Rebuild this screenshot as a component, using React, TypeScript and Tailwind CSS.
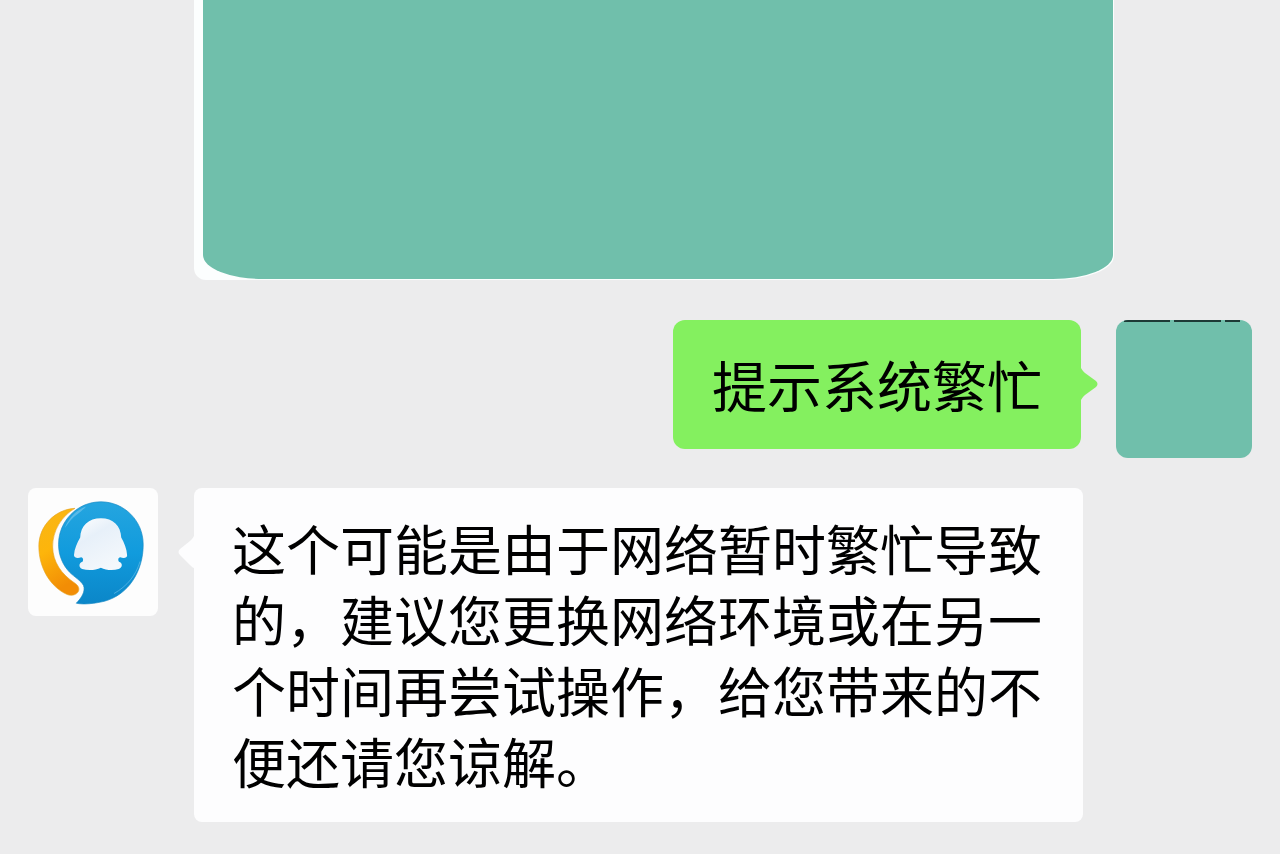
import { ReactNode } from 'react';

type Side = 'sent' | 'received';

interface BubbleProps {
  side: Side;
  children: ReactNode;
}

const bubbleMap: Record<Side, string> = {
  sent: 'bg-[#84f05f] rounded-xl text-[55px] px-[39px] pt-7 pb-[30px]',
  received: 'bg-[#fdfdfe] rounded-lg text-[54px] px-[38px] pt-6 pb-[26px]',
};

function Bubble({ side, children }: BubbleProps) {
  return (
    <div className={`relative leading-[71px] text-black ${bubbleMap[side]}`}>
      {side === 'sent' ? (
        <svg className="absolute left-full top-12 h-8 w-[17px]" viewBox="0 0 17 32" aria-hidden="true">
          <path d="M0 0C1 2 2 3 4 5L15 13Q18 16 15 19L4 27C2 29 1 30 0 32Z" fill="#84f05f" />
        </svg>
      ) : (
        <svg className="absolute right-full top-12 h-8 w-4" viewBox="0 0 16 32" aria-hidden="true">
          <path d="M16 0C15 2 14 3 12 5L2 13Q-1 16 2 19L12 29C14 31 15 32 16 32Z" fill="#fdfdfe" />
        </svg>
      )}
      <p>{children}</p>
    </div>
  );
}

function ServiceLogo() {
  return (
    <svg className="h-full w-full" viewBox="24 21 390 390" aria-hidden="true">
      <defs>
        <linearGradient id="blue" x1="0" y1="0" x2="0" y2="1">
          <stop offset="0" stopColor="#25a5df" />
          <stop offset="0.5" stopColor="#119bdd" />
          <stop offset="1" stopColor="#0b86c8" />
        </linearGradient>
        <linearGradient id="orange" x1="0" y1="0" x2="0.3" y2="1">
          <stop offset="0" stopColor="#f8b617" />
          <stop offset="0.5" stopColor="#fdb50b" />
          <stop offset="1" stopColor="#f28d05" />
        </linearGradient>
        <linearGradient id="penguin" x1="0" y1="0" x2="0.6" y2="1">
          <stop offset="0" stopColor="#ffffff" />
          <stop offset="0.4" stopColor="#e7f0f9" />
          <stop offset="1" stopColor="#f4f8fc" />
        </linearGradient>
      </defs>
      <path
        d="M164 83C103 86 54 137 54 198C54 267 91 323 139 345C153 351 170 347 175 335C178 326 174 318 164 311C121 283 97 245 96 201C95 151 124 106 164 83Z"
        fill="url(#orange)"
        stroke="#e6a526"
        strokeWidth="2"
      />
      <path
        d="M243 63C172 63 114 121 114 193C114 226 127 256 148 278C162 292 183 304 190 318C197 335 184 356 168 372C190 377 225 373 254 366C327 346 372 275 372 193C372 121 314 63 243 63Z"
        fill="url(#blue)"
        stroke="#1789c5"
        strokeWidth="2"
      />
      <path d="M133 143C145 112 168 88 198 77C184 94 164 104 151 119Z" fill="#8fd0ef" opacity="0.5" />
      <path d="M284 342C323 320 350 287 362 246" fill="none" stroke="#65bce8" strokeWidth="3" strokeLinecap="round" opacity="0.7" />
      <path
        d="M243 113C206 113 181 136 180 172C171 188 162 207 161 226C162 234 172 237 183 232C188 233 191 239 187 246C176 249 174 263 186 268C204 273 227 272 243 264C258 272 281 273 297 268C311 263 309 249 298 246C294 239 296 233 302 232C313 237 323 234 323 226C322 207 314 188 305 172C304 136 280 113 243 113Z"
        fill="url(#penguin)"
      />
    </svg>
  );
}

export default function App() {
  return (
    <main
      lang="zh-CN"
      className="flex min-h-screen flex-col bg-[#ececed] pb-8 font-['Noto_Sans_CJK_SC',sans-serif]"
    >
      {/* Picture message, scrolled partly out of view */}
      <div className="pl-[194px] pr-[166px]">
        <div className="rounded-bl-xl bg-[#fcfefe] pb-px pl-[9px] pr-px [border-bottom-right-radius:60px_24px]">
          <div className="h-[279px] bg-[#70bfab] [border-bottom-left-radius:60px_24px] [border-bottom-right-radius:60px_24px]" />
        </div>
      </div>

      <div className="mt-10 flex items-start justify-end gap-[35px] pl-[194px] pr-7">
        <Bubble side="sent">提示系统繁忙</Bubble>
        <div className="h-[138px] w-34 shrink-0 overflow-hidden rounded-xl bg-[#70bfab]">
          <div className="ml-2 mr-3 flex h-0.5 gap-1">
            <div className="flex-3 bg-[#1d3a36]" />
            <div className="flex-3 bg-[#1d3a36]" />
            <div className="flex-1 bg-[#1d3a36]" />
          </div>
        </div>
      </div>

      <div className="mt-[30px] flex items-start gap-9 pl-7 pr-[197px]">
        <div className="h-32 w-[130px] shrink-0 overflow-hidden rounded-lg bg-[#fdfdfd]">
          <ServiceLogo />
        </div>
        <Bubble side="received">
          这个可能是由于网络暂时繁忙导致的，建议您更换网络环境或在另一个时间再尝试操作，给您带来的不便还请您谅解。
        </Bubble>
      </div>
    </main>
  );
}
